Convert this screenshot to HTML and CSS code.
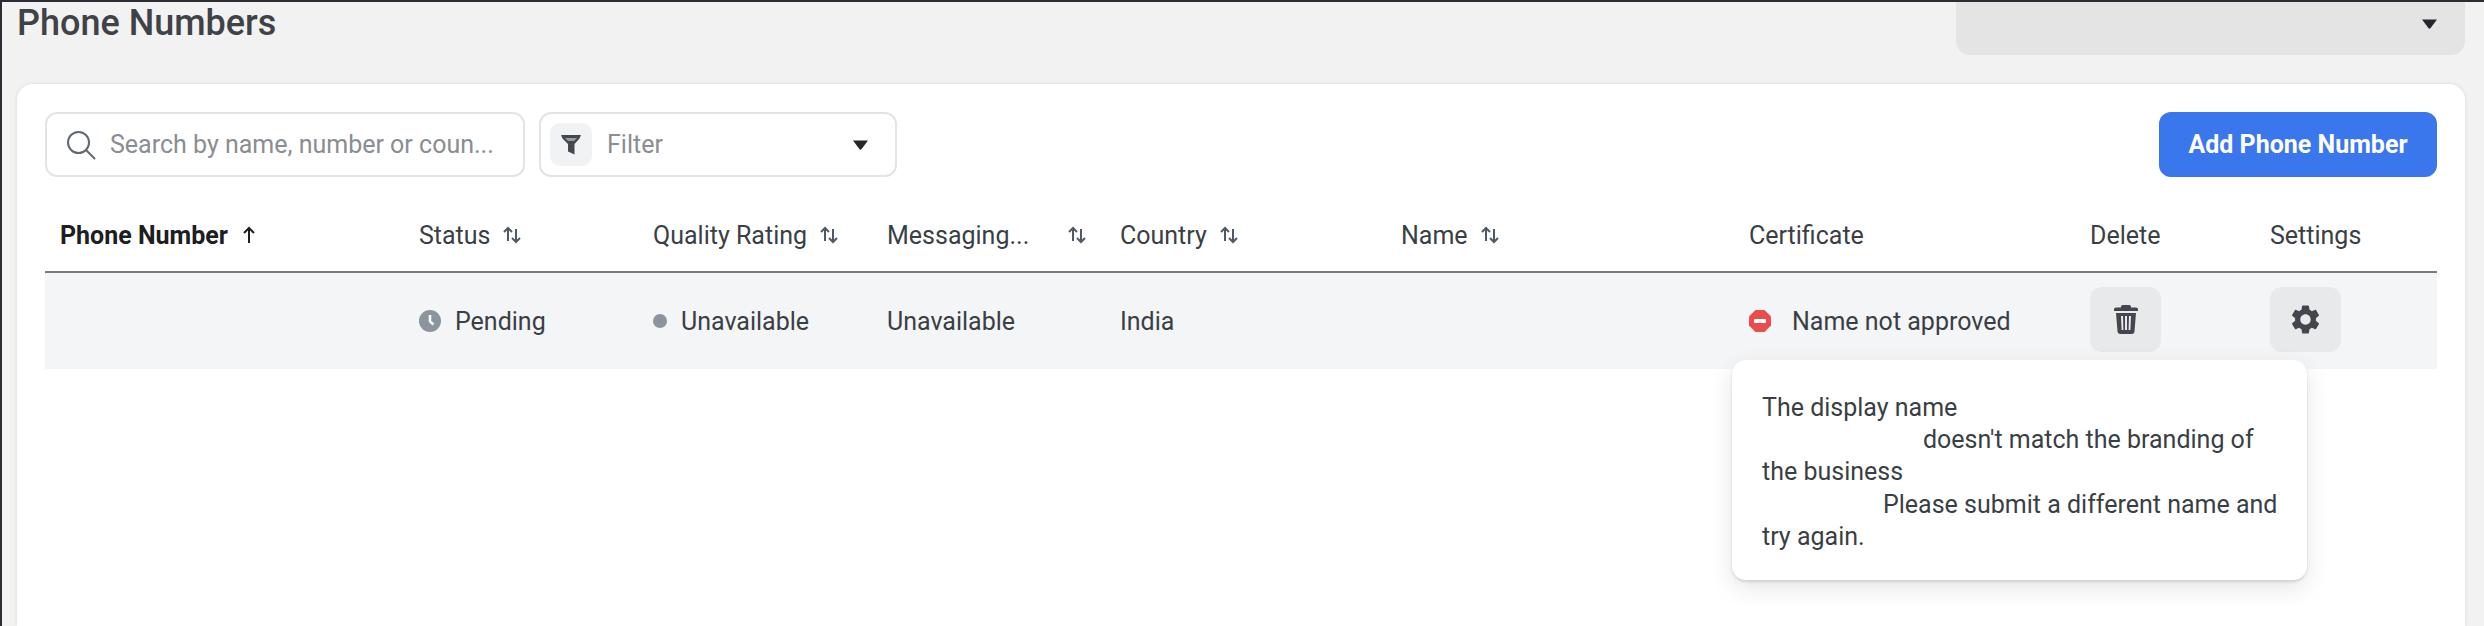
FILE: index.html
```html
<!DOCTYPE html>
<html lang="en">
<head>
    <meta charset="UTF-8">
    <meta name="viewport" content="width=device-width, initial-scale=1.0">
    <title>Phone Numbers</title>
    <link rel="stylesheet" href="styles.css">
</head>
<body>
    <div class="page-head">
        <h1>Phone Numbers</h1>
        <div class="account-select">
            <svg class="caret" viewBox="0 0 17 11"><path d="M1 1.500h15L9.600 10a1.400 1.400 0 0 1-2.200 0z"/></svg>
        </div>
    </div>

    <div class="card">
        <div class="toolbar">
            <div class="search-box">
                <svg class="search-icon" viewBox="0 0 30 30"><circle cx="12.500" cy="12.500" r="10.500"/><path d="M20 20l8.500 8.500"/></svg>
                <span class="placeholder">Search by name, number or coun...</span>
            </div>
            <div class="filter-box">
                <span class="filter-chip">
                    <svg viewBox="0 0 22 22"><path d="M1 1h20l-1.500 3.500L14.500 10v10.500L8 17.500V10L2.500 4.500z"/><path class="filter-cut" d="M5 4h12l-3 3H8z"/></svg>
                </span>
                <span class="placeholder filter-label">Filter</span>
                <svg class="caret" viewBox="0 0 17 11"><path d="M1 1.500h15L9.600 10a1.400 1.400 0 0 1-2.200 0z"/></svg>
            </div>
            <button class="add-btn">Add Phone Number</button>
        </div>

        <div class="table-row table-head">
            <div class="cell first sorted">Phone Number
                <svg class="sort-up" viewBox="0 0 14 18"><path d="M7 17V2M2 7l5-5 5 5"/></svg>
            </div>
            <div class="cell">Status <svg class="sort" viewBox="0 0 20 18"><path d="M6 15V2M2 6l4-4 4 4M14 3v13M10 12l4 4 4-4"/></svg></div>
            <div class="cell">Quality Rating <svg class="sort" viewBox="0 0 20 18"><path d="M6 15V2M2 6l4-4 4 4M14 3v13M10 12l4 4 4-4"/></svg></div>
            <div class="cell spread">Messaging... <svg class="sort" viewBox="0 0 20 18"><path d="M6 15V2M2 6l4-4 4 4M14 3v13M10 12l4 4 4-4"/></svg></div>
            <div class="cell">Country <svg class="sort" viewBox="0 0 20 18"><path d="M6 15V2M2 6l4-4 4 4M14 3v13M10 12l4 4 4-4"/></svg></div>
            <div class="cell">Name <svg class="sort" viewBox="0 0 20 18"><path d="M6 15V2M2 6l4-4 4 4M14 3v13M10 12l4 4 4-4"/></svg></div>
            <div class="cell">Certificate</div>
            <div class="cell">Delete</div>
            <div class="cell">Settings</div>
        </div>

        <div class="table-row table-body">
            <div class="cell first"></div>
            <div class="cell">
                <svg class="clock" viewBox="0 0 22 22"><circle cx="11" cy="11" r="11"/><path d="M11 5v6.500l3.500 3"/></svg>
                Pending
            </div>
            <div class="cell"><span class="dot"></span>Unavailable</div>
            <div class="cell">Unavailable</div>
            <div class="cell">India</div>
            <div class="cell"></div>
            <div class="cell">
                <svg class="blocked" viewBox="0 0 22 22"><path d="M6.500 0h9L22 6.500v9L15.500 22h-9L0 15.500v-9z"/><rect x="5" y="9" width="12" height="4" rx="1"/></svg>
                Name not approved
            </div>
            <div class="cell">
                <button class="icon-btn">
                    <svg class="trash" viewBox="0 0 24 29"><path d="M9 0h6a2 2 0 0 1 2 2.500h5a2 2 0 0 1 2 2.500v1H0V5a2 2 0 0 1 2-2.500h5A2 2 0 0 1 9 0z"/><path fill-rule="evenodd" d="M2 8h20l-1.500 18a3 3 0 0 1-3 3h-11a3 3 0 0 1-3-3zM7 11l.6 14h1.800L9 11zM11 11v14h2V11zM15 11l-.4 14h1.800L17 11z"/></svg>
                </button>
            </div>
            <div class="cell">
                <button class="icon-btn">
                    <svg class="gear" viewBox="2.400 2 19.200 20"><path d="M19.140 12.940c.04-.3.06-.61.06-.94 0-.32-.02-.64-.07-.94l2.030-1.580c.18-.14.23-.41.12-.61l-1.920-3.320c-.12-.22-.37-.29-.59-.22l-2.390.96c-.5-.38-1.030-.7-1.620-.94l-.36-2.540c-.04-.24-.24-.41-.48-.41h-3.840c-.24 0-.43.17-.47.41l-.36 2.540c-.59.24-1.130.57-1.620.94l-2.390-.96c-.22-.08-.47 0-.59.22L2.740 8.870c-.12.21-.08.47.12.61l2.030 1.580c-.05.3-.09.63-.09.94s.02.64.07.94l-2.030 1.580c-.18.14-.23.41-.12.61l1.920 3.320c.12.22.37.29.59.22l2.390-.96c.5.38 1.030.7 1.620.94l.36 2.540c.05.24.24.41.48.41h3.840c.24 0 .44-.17.47-.41l.36-2.540c.59-.24 1.130-.56 1.620-.94l2.390.96c.22.08.47 0 .59-.22l1.920-3.320c.12-.22.07-.47-.12-.61l-2.010-1.580zM12 15.600c-1.980 0-3.600-1.620-3.600-3.600s1.620-3.600 3.600-3.600 3.600 1.620 3.600 3.600-1.620 3.600-3.600 3.600z"/></svg>
                </button>
            </div>
        </div>

        <div class="tooltip">
            The display name<br>
            <span class="gap gap-name"></span>doesn't match the branding of<br>
            the business<br>
            <span class="gap gap-policy"></span>Please submit a different name and<br>
            try again.
        </div>
    </div>
</body>
</html>
```

FILE: styles.css
```css
* {
    box-sizing: border-box;
}

body {
    margin: 0;
    height: 626px;
    overflow: hidden;
    background: #f2f2f2;
    border-top: 2px solid #2a2d33;
    border-left: 2px solid #2a2d33;
    font-family: 'Roboto', sans-serif;
    font-size: 25px;
    color: #3a3f45;
    padding: 0 19px 0 15px;
}

.page-head {
    display: flex;
    justify-content: space-between;
    height: 82px;
}

h1 {
    margin: 0;
    font-size: 36px;
    font-weight: 500;
    line-height: 42px;
    color: #3f4246;
}

.account-select {
    width: 509px;
    height: 53px;
    background: #e4e4e4;
    border-radius: 0 0 14px 14px;
    display: flex;
    justify-content: flex-end;
    align-items: center;
    padding: 0 27px 10px 0;
}

.caret {
    width: 17px;
    height: 11px;
    fill: #24272b;
}

.card {
    position: relative;
    height: 542px;
    background: #fff;
    border-radius: 16px 16px 0 0;
    box-shadow: 0 0 4px rgba(0, 0, 0, 0.1);
    padding: 28px 28px 0;
}

.toolbar {
    display: flex;
    height: 65px;
    gap: 14px;
}

.search-box, .filter-box {
    display: flex;
    align-items: center;
    border: 2px solid #e3e4e6;
    border-radius: 12px;
    height: 65px;
}

.search-box {
    width: 480px;
    padding-left: 19px;
}

.search-icon {
    width: 30px;
    height: 30px;
    margin-right: 14px;
    fill: none;
    stroke: #5f6873;
    stroke-width: 2;
    stroke-linecap: round;
}

.placeholder {
    color: #8a8d91;
    white-space: nowrap;
}

.filter-box {
    width: 358px;
    padding: 0 26px 0 9px;
}

.filter-chip {
    width: 42px;
    height: 43px;
    background: #f1f2f3;
    border-radius: 10px;
    display: flex;
    align-items: center;
    justify-content: center;
}

.filter-chip svg {
    width: 22px;
    height: 22px;
    fill: #444950;
}

.filter-cut {
    fill: #9a9ea3;
}

.filter-label {
    margin-left: 15px;
    flex: 1;
}

.add-btn {
    margin-left: auto;
    width: 278px;
    height: 65px;
    border: none;
    border-radius: 12px;
    background: #3a76ec;
    color: #fff;
    font-family: inherit;
    font-size: 25px;
    font-weight: 700;
    padding: 0;
}

.table-row {
    display: grid;
    grid-template-columns: 374px 234px 234px 233px 281px 348px 341px 180px 166px;
}

.table-head {
    margin-top: 30px;
    height: 66px;
    align-items: center;
    border-bottom: 2px solid #7a7b7d;
    padding-bottom: 8px;
}

.table-body {
    height: 96px;
    align-items: center;
    background: #f4f5f6;
}

.cell {
    display: flex;
    align-items: center;
    white-space: nowrap;
    color: #3a3f45;
}

.cell.first {
    padding-left: 15px;
}

.sorted {
    font-weight: 700;
    color: #1c1e21;
}

.sort-up {
    width: 14px;
    height: 18px;
    margin-left: 14px;
    fill: none;
    stroke: #1c1e21;
    stroke-width: 2;
}

.sort {
    width: 20px;
    height: 18px;
    margin-left: 12px;
    fill: none;
    stroke: #4f5a66;
    stroke-width: 2;
}

.spread {
    justify-content: space-between;
    padding-right: 33px;
}

.clock {
    width: 22px;
    height: 22px;
    margin-right: 14px;
    fill: #8d949e;
}

.clock path {
    fill: none;
    stroke: #fff;
    stroke-width: 2.500;
}

.dot {
    width: 14px;
    height: 14px;
    border-radius: 50%;
    background: #8d949e;
    margin-right: 14px;
}

.blocked {
    width: 22px;
    height: 22px;
    margin-right: 21px;
    fill: #eb4c4c;
}

.blocked rect {
    fill: #fff;
}

.icon-btn {
    width: 71px;
    height: 65px;
    margin-bottom: 3px;
    border: none;
    border-radius: 12px;
    background: #e8e9ea;
    display: flex;
    align-items: center;
    justify-content: center;
    padding: 0;
}

.trash {
    width: 24px;
    height: 29px;
    fill: #43474d;
}

.gear {
    width: 29px;
    height: 29px;
    fill: #43474d;
}

.tooltip {
    position: absolute;
    left: 1715px;
    top: 276px;
    width: 575px;
    height: 220px;
    padding: 32px 30px;
    background: #fff;
    border-radius: 14px;
    line-height: 32.200px;
    white-space: nowrap;
    box-shadow: 0 2px 3px rgba(0, 0, 0, 0.12), 0 8px 24px rgba(0, 0, 0, 0.1);
}

.gap {
    display: inline-block;
}

.gap-name {
    width: 161px;
}

.gap-policy {
    width: 121px;
}
```
